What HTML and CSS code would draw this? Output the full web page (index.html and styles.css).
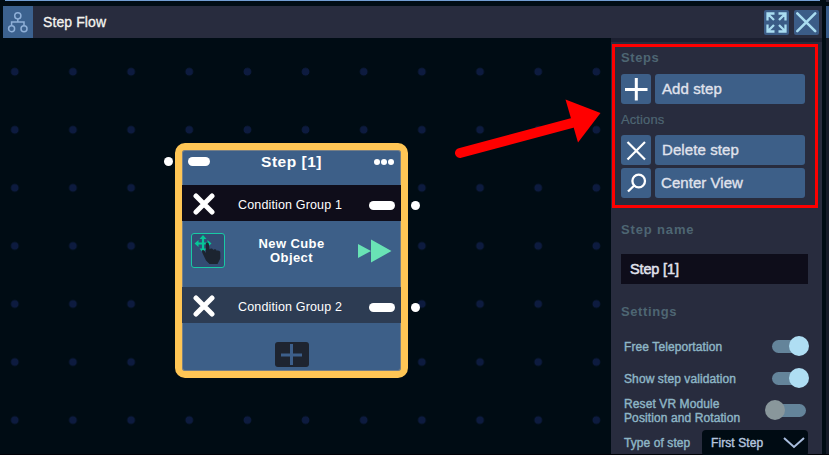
FILE: index.html
```html
<!DOCTYPE html>
<html lang="en">
<head>
<meta charset="utf-8">
<title>Step Flow</title>
<link rel="stylesheet" href="styles.css">
</head>
<body>
<div class="app">
  <div class="topline"><span class="topline-main"></span><span class="topline-next"></span></div>
  <div class="window-row">
    <main class="window">
      <header class="titlebar">
        <div class="flow-icon">
          <svg width="30" height="32" viewBox="0 0 30 32" fill="none" stroke="#8fb0d8" stroke-width="1.5"><circle cx="14.8" cy="9.8" r="3.1"/><circle cx="8.6" cy="22.7" r="3"/><circle cx="21" cy="22.7" r="3"/><path d="M14.8 13v3M8.6 19.5V16h12.4v3.5"/></svg>
        </div>
        <h1><span>Step Flow</span></h1>
        <button class="head-btn" aria-label="Expand"><svg width="25" height="25" viewBox="0 0 25 25" fill="none" stroke="#a9dcf0" stroke-width="2.300"><path d="M3.500 10.500v-7h7M4 4l6 6M14.500 3.500h7v7M21 4l-6 6M3.500 14.500v7h7M4 21l6-6M14.500 21.500h7v-7M21 21l-6-6"/></svg></button>
        <button class="head-btn last" aria-label="Close"><svg width="25" height="25" viewBox="0 0 25 25" fill="none" stroke="#a9dcf0" stroke-width="2.6" stroke-linecap="round"><path d="M3.3 3.3l17.9 17.9M21.2 3.3L3.3 21.2"/></svg></button>
      </header>
      <div class="workspace">
        <section class="canvas">
          <article class="node">
            <i class="port port-in"></i><i class="port port-a"></i><i class="port port-b"></i>
            <div class="node-head"><i class="pill"></i><b><span>Step [1]</span></b><span class="dots"><i></i><i></i><i></i></span></div>
            <div class="group dark"><svg class="cross" width="22" height="22" viewBox="0 0 22 22"><path d="M3 3l16 16M19 3L3 19"/></svg><p><span>Condition Group 1</span></p><i class="pill wide"></i></div>
            <div class="condition">
              <div class="grab"><svg width="34" height="35" viewBox="0 0 34 35"><path d="M12 4v14M5 10.500h14" fill="none" stroke="#05c797" stroke-width="2.200"/><path d="M12 2l3.500 4h-7zM12 19.500l-3.500-4h7zM3.500 10.500l4-3.500v7zM20.500 10.500l-4-3.500v7z" fill="#05c797"/><path class="hand" d="M14.700 11.300c0-2.300 3-2.300 3.200 0l.6 5.200c.8-1.400 3.200-1.200 3.600.5 1-1.100 3.200-.7 3.500.8 1.600-.8 3.700.1 3.700 2v5.700L26.500 31H18.500L15 27.500l-3.800-8c-.8-2.600 1-3.200 2.300-1.600l1.500 2z"/></svg></div>
              <p><span>New Cube</span><br><span>Object</span></p>
              <svg class="forward" width="34" height="24" viewBox="0 0 34 24"><path d="M0 5l13 7-13 7zM13 .5L33.500 12 13 23.500z" fill="#69e3b5"/></svg>
            </div>
            <div class="group"><svg class="cross" width="22" height="22" viewBox="0 0 22 22"><path d="M3 3l16 16M19 3L3 19"/></svg><p><span>Condition Group 2</span></p><i class="pill wide"></i></div>
            <div class="node-foot"><button aria-label="Add group"><svg width="34" height="25" viewBox="0 0 34 25"><path d="M6 13h21M16.500 2v21" stroke="#3d5f8b" stroke-width="3"/></svg></button></div>
          </article>
          <svg class="arrow" width="155" height="63" viewBox="0 0 155 63"><path d="M10 55L122 25" stroke="red" stroke-width="10" stroke-linecap="round"/><path d="M118.500 -.8l35 13.500-22.500 29.500z" transform="translate(-3 2.300)" fill="red"/></svg>
        </section>
        <aside class="panel">
          <div class="highlight"></div>
          <h2 class="h-steps">Steps</h2>
          <div class="action"><button class="square"><svg width="30" height="30" viewBox="0 0 30 30"><path d="M4 15.500h22.500M15.300 4v22.500" stroke="#fff" stroke-width="3"/></svg></button><button class="long">Add step</button></div>
          <h3>Actions</h3>
          <div class="action"><button class="square"><svg width="30" height="30" viewBox="0 0 30 30"><path d="M6.500 7l17.500 17.500M24 7L6.500 24.500" stroke="#fff" stroke-width="2.200"/></svg></button><button class="long">Delete step</button></div>
          <div class="action third"><button class="square"><svg width="30" height="30" viewBox="0 0 30 30" fill="none" stroke="#fff" stroke-width="2.300"><circle cx="17.700" cy="13" r="6.300"/><path d="M13.200 17.500L7 23.500"/></svg></button><button class="long center-view">Center View</button></div>
          <h2 class="h-name">Step name</h2>
          <div class="field">Step [1]</div>
          <h2 class="h-settings">Settings</h2>
          <div class="setting s1"><label>Free Teleportation</label><i class="toggle on"></i></div>
          <div class="setting s2"><label>Show step validation</label><i class="toggle on"></i></div>
          <div class="setting s3"><label>Reset VR Module<br><span>Position and Rotation</span></label><i class="toggle"></i></div>
          <div class="type"><label>Type of step</label><div class="select"><span>First Step</span><svg width="22" height="12" viewBox="0 0 22 12"><path d="M1 1l10 9L21 1" fill="none" stroke="#a9bedf" stroke-width="2"/></svg></div></div>
        </aside>
      </div>
    </main>
    <div class="neighbor"><i></i></div>
  </div>
</div>
</body>
</html>
```
FILE: styles.css
```css
* { box-sizing: border-box; }
body { margin: 0; background: #000c14; font-family: "Liberation Sans", Arial, sans-serif; }
button { border: 0; padding: 0; font: inherit; color: inherit; }
svg { display: block; }
h1, h2, h3, p { margin: 0; }
.app { width: 829px; height: 455px; overflow: hidden; display: flex; flex-direction: column; }
.topline { display: flex; gap: 6px; height: 6px; padding-left: 5px; }
.topline-main { width: 815px; height: 1px; background: #729ed2; }
.topline-next { flex: 1; height: 2px; background: #252b3b; }
.window-row { flex: 1; min-height: 0; display: flex; gap: 4px; padding-left: 3px; border-bottom: 1px solid #000107; }
.window { width: 819px; display: flex; flex-direction: column; }
.neighbor { flex: 1; background: #151b28; }
.neighbor i { display: block; height: 32px; background: #375b8a; }
.titlebar { height: 32px; display: flex; align-items: center; background: #282c3e; }
.flow-icon { width: 30px; height: 32px; background: #3c628f; }
.titlebar h1 { flex: 1; padding-left: 10px; font-size: 14px; line-height: 32px; font-weight: 400; color: #f4f4f0; letter-spacing: .1px; -webkit-text-stroke: .3px; }
.head-btn { width: 25px; height: 25px; margin-right: 5px; border-radius: 2px; background: #3b5c87; }
.head-btn.last { margin-right: 3px; }
.workspace { flex: 1; min-height: 0; display: flex; }
.canvas { position: relative; width: 608px; background: radial-gradient(circle at center, #0d1b3f 3.600px, transparent 4.200px) -17.300px 4.700px / 58.170px 58.070px #000c14; }
.node { position: absolute; left: 172px; top: 105px; width: 233px; height: 235px; border: 7px solid #ffc655; border-radius: 10px; background: #3d5f88; color: #fff; box-shadow: inset 0 0 0 1px #777f86; }
.port { position: absolute; width: 9px; height: 9px; border-radius: 50%; background: #fff; }
.port-in { left: -18px; top: 7px; }
.port-a { left: 229px; top: 51px; }
.port-b { left: 229px; top: 153px; }
.node-head { height: 35px; padding: 0 7px 0 6px; display: flex; justify-content: space-between; align-items: flex-start; }
.node-head b { margin-right: 1px; padding: 3px 0 0; font-size: 15.500px; line-height: 18px; letter-spacing: .5px; }
.pill { width: 22px; height: 9px; margin-top: 7px; border-radius: 5px; background: #fff; }
.dots { display: flex; gap: 1px; padding-top: 9px; }
.dots i { width: 6px; height: 6px; border-radius: 50%; background: #fff; }
.group { height: 36px; display: flex; align-items: center; background: #2d3c53; }
.group.dark { background: #0f0d1a; }
.cross { margin: 2px 0 0 11px; stroke: #fff; stroke-width: 5; stroke-linecap: round; }
.group p { width: 118px; margin: 3px 0 0 23px; font-size: 12.500px; line-height: 16px; letter-spacing: .15px; white-space: nowrap; }
.pill.wide { width: 26px; margin: 5px 0 0 13px; }
.condition { height: 66px; display: flex; padding-left: 9px; }
.grab { width: 34px; height: 35px; margin-top: 12px; border: 1px solid #19c9a5; border-radius: 3px; background: #334c73; }
.grab svg { margin: -1px; }
.hand { fill: #1c2430; }
.condition p { width: 101px; margin: 16px 0 0 16px; text-align: center; font-size: 13px; line-height: 14px; font-weight: 700; letter-spacing: .4px; }
.forward { margin: 18px 0 0 16px; }
.node-foot { padding-top: 19px; display: flex; justify-content: center; }
.node-foot button { width: 34px; height: 25px; border-radius: 3px; background: #1e2430; }
.arrow { position: absolute; left: 447px; top: 60px; }
.panel { position: relative; width: 211px; padding: 13px 0 0 10px; background: #282c3e; border-top: 4px solid #1b1f30; color: #e0e3ed; }
.highlight { position: absolute; left: 1px; top: 2px; width: 206px; height: 164px; border: 3px solid #f00; }
.panel h2, .panel h3 { color: #4e6673; font-size: 13px; line-height: 15px; letter-spacing: .75px; }
.panel h2.h-steps { margin-top: -5px; height: 24px; letter-spacing: .6px; }
.action { display: flex; gap: 4px; height: 30px; }
.action button { border-radius: 3px; background: #3d5f88; }
.square { width: 30px; }
.action .long { width: 150px; padding-left: 7px; text-align: left; font-size: 15px; line-height: 30px; letter-spacing: .1px; -webkit-text-stroke: .35px; }
.action .center-view { padding-left: 6px; letter-spacing: .05px; }
.panel h3 { height: 31px; padding-top: 8px; font-weight: 400; letter-spacing: .1px; -webkit-text-stroke: .2px; }
.third { margin-top: 3px; }
.panel h2.h-name { margin-top: 24px; height: 32px; letter-spacing: .85px; }
.field { width: 187px; height: 30px; padding-left: 9px; background: #0e0d1a; font-size: 14.500px; line-height: 30px; letter-spacing: -.15px; -webkit-text-stroke: .5px; }
.panel h2.h-settings { margin-top: 20px; height: 15px; letter-spacing: .6px; }
.setting { display: flex; justify-content: space-between; width: 188px; padding-left: 3px; color: #8eb6c6; font-size: 12px; line-height: 14px; letter-spacing: .1px; -webkit-text-stroke: .4px; }
.s1 { margin-top: 17px; height: 32px; }
.s2 { height: 29px; }
.s3 { height: 33px; }
.setting label { padding-top: 4px; }
.s3 label { padding-top: 0; }
.toggle { position: relative; width: 34px; height: 13px; margin: 4px 3px 0 0; border-radius: 7px; background: #64849a; }
.s3 .toggle { margin-top: 7px; }
.toggle::after { content: ""; position: absolute; left: -7px; top: -4px; width: 20px; height: 20px; border-radius: 50%; background: #89979b; }
.toggle.on::after { left: 17px; background: #afdef3; }
.type { display: flex; padding-left: 3px; color: #8eb6c6; font-size: 12px; letter-spacing: .08px; -webkit-text-stroke: .4px; }
.type label { width: 78px; padding-top: 6px; }
.select { display: flex; align-items: center; gap: 20px; width: 106px; height: 26px; padding-left: 9px; border-radius: 4px; background: #000b13; color: #b5c5df; }
```
